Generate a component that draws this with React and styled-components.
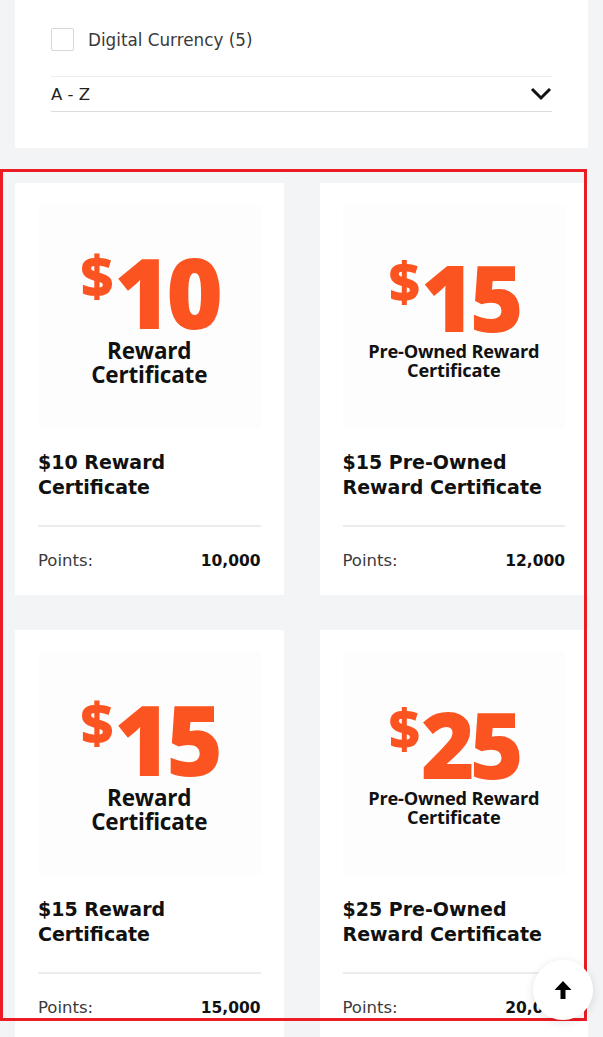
import React from 'react'
import styled, { createGlobalStyle } from 'styled-components'

const GlobalStyle = createGlobalStyle`
  body {
    margin: 0;
    background: #f3f4f6;
    font-family: "DejaVu Sans", "Liberation Sans", sans-serif;
    color: #222;
  }
`

const Page = styled.div`
  padding: 0 15px 40px;
`

const FilterPanel = styled.section`
  background: #fff;
  padding: 28px 36px 36px;
`

const CheckRow = styled.label`
  display: flex;
  align-items: center;
  gap: 14px;
  font-size: 16.8px;
  color: #3a3a3a;
`

const Box = styled.span`
  width: 21px;
  height: 21px;
  border: 1px solid #d8d8d8;
  border-radius: 2px;
  background: #fff;
`

const Select = styled.div`
  margin-top: 25px;
  height: 34px;
  border-top: 1px solid #ececec;
  border-bottom: 1px solid #dcdcdc;
  display: flex;
  align-items: center;
  justify-content: space-between;
  font-size: 16.5px;
  color: #222;
`

const Results = styled.section`
  position: relative;
  margin-top: 35px;
`

const Frame = styled.div`
  position: absolute;
  left: -15px;
  top: -14px;
  width: 587px;
  height: 852px;
  border: 3px solid #ec1c24;
  box-sizing: border-box;
  pointer-events: none;
  z-index: 2;
`

const Grid = styled.div`
  display: grid;
  grid-template-columns: 1fr 1fr;
  column-gap: 36px;
  row-gap: 35px;
`

const Card = styled.article`
  background: #fff;
  padding: 22px 23px 0;
  height: 412px;
  box-sizing: border-box;
`

const Art = styled.div`
  height: 223px;
  background: #fdfdfd;
  display: flex;
  flex-direction: column;
  align-items: center;
  justify-content: center;
  padding-top: 8px;
  box-sizing: border-box;
  font-family: "Open Sans", "DejaVu Sans", sans-serif;
`

const Amount = styled.div`
  display: flex;
  align-items: flex-start;
  color: #fb5420;
  font-weight: 800;
  line-height: 0.78;
`

const Dollar = styled.span`
  font-size: ${p => (p.$small ? '54px' : '57px')};
  margin-right: 1px;
  margin-top: -1px;
`

const Figure = styled.span`
  font-size: ${p => (p.$small ? '92px' : '97px')};
  letter-spacing: -5px;
`

const ArtLabel = styled.div`
  margin-top: 10px;
  font-weight: 700;
  text-align: center;
  color: #111;
  font-size: ${p => (p.$small ? '18.2px' : '22.5px')};
  line-height: ${p => (p.$small ? '19px' : '24px')};
  letter-spacing: -0.2px;
`

const Title = styled.h3`
  margin: 22px 0 0;
  height: 52px;
  font-size: 19px;
  line-height: 24.5px;
  font-weight: 700;
  color: #111;
  border-bottom: 2px solid #ececec;
  padding-bottom: 23px;
`

const PointsRow = styled.div`
  display: flex;
  justify-content: space-between;
  align-items: center;
  margin-top: 24px;
  font-size: 16.5px;
`

const Label = styled.span`
  color: #3a3a3a;
`

const Value = styled.span`
  font-weight: 700;
  font-size: 15.5px;
  color: #111;
`

const TopButton = styled.button`
  position: fixed;
  right: 10px;
  bottom: 17px;
  width: 60px;
  height: 60px;
  border-radius: 50%;
  border: none;
  background: #fff;
  box-shadow: 0 2px 10px rgba(0, 0, 0, 0.12);
  display: flex;
  align-items: center;
  justify-content: center;
  z-index: 3;
`

const rewards = [
  { amount: '10', lines: ['Reward', 'Certificate'], title: '$10 Reward Certificate', points: '10,000' },
  { amount: '15', lines: ['Pre-Owned Reward', 'Certificate'], small: true, title: '$15 Pre-Owned Reward Certificate', points: '12,000' },
  { amount: '15', lines: ['Reward', 'Certificate'], title: '$15 Reward Certificate', points: '15,000' },
  { amount: '25', lines: ['Pre-Owned Reward', 'Certificate'], small: true, title: '$25 Pre-Owned Reward Certificate', points: '20,000' },
]

export default function App() {
  return (
    <>
      <GlobalStyle />
      <Page>
        <FilterPanel>
          <CheckRow>
            <Box />
            Digital Currency (5)
          </CheckRow>
          <Select>
            <span>A - Z</span>
            <svg width="22" height="14" viewBox="0 0 22 14">
              <path d="M2 2l9 9 9-9" fill="none" stroke="#111" strokeWidth="3" />
            </svg>
          </Select>
        </FilterPanel>

        <Results>
          <Frame />
          <Grid>
            {rewards.map((r, i) => (
              <Card key={i}>
                <Art>
                  <Amount>
                    <Dollar $small={r.small}>$</Dollar>
                    <Figure $small={r.small}>{r.amount}</Figure>
                  </Amount>
                  <ArtLabel $small={r.small}>
                    {r.lines.map(line => (
                      <div key={line}>{line}</div>
                    ))}
                  </ArtLabel>
                </Art>
                <Title>{r.title}</Title>
                <PointsRow>
                  <Label>Points:</Label>
                  <Value>{r.points}</Value>
                </PointsRow>
              </Card>
            ))}
          </Grid>
        </Results>
      </Page>

      <TopButton aria-label="Back to top">
        <svg width="20" height="20" viewBox="0 0 20 20">
          <path d="M10 1L1.5 10h6v9h5v-9h6z" fill="#000" />
        </svg>
      </TopButton>
    </>
  )
}
